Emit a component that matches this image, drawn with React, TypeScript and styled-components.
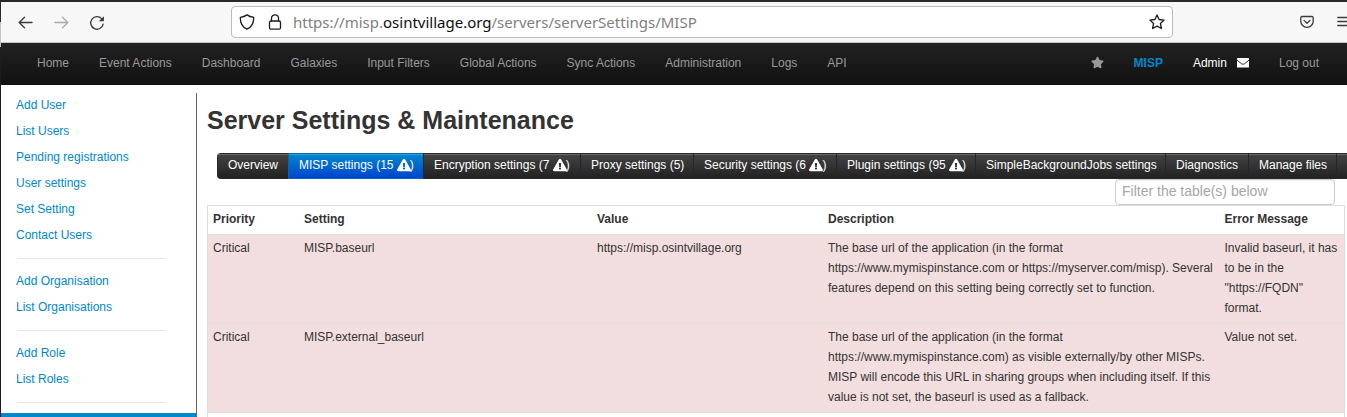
import React from "react";
import styled, { createGlobalStyle } from "styled-components";
import { FaStar, FaExclamationTriangle } from "react-icons/fa";

const GlobalStyle = createGlobalStyle`
  *, *::before, *::after { box-sizing: border-box; }
  html, body { margin: 0; padding: 0; background: #fff; overflow: hidden; }
  body { font-family: "Liberation Sans", Arial, sans-serif; font-size: 12px; line-height: 20px; color: #333; }
`;

const Screen = styled.div`
  display: flex;
  width: 1347px;
  height: 417px;
  overflow: hidden;
`;

const WindowEdge = styled.div`
  flex: 0 0 1px;
  background: linear-gradient(#2b282b 0 22px, #c4c4c4 22px 47px, #1f1a24 47px);
`;

const BrowserWindow = styled.div`
  flex: 1;
  min-width: 0;
  display: flex;
  flex-direction: column;
`;

const Toolbar = styled.header`
  flex: 0 0 43px;
  display: flex;
  align-items: flex-start;
  border-top: 2px solid #2b282b;
  border-bottom: 1px solid #c3c8c5;
  background: #f7f7f7;
  color: #3a3a3a;
`;

const ToolIcon = styled.svg<{ $left: number; $top: number; $right?: number; $faded?: boolean }>`
  display: block;
  flex: none;
  margin: ${(p) => p.$top}px ${(p) => p.$right ?? 0}px 0 ${(p) => p.$left}px;
  opacity: ${(p) => (p.$faded ? 0.4 : 1)};
  fill: none;
  stroke: currentColor;
  stroke-width: 1.3;
  stroke-linecap: round;
  stroke-linejoin: round;
`;

const AddressBar = styled.div`
  flex: 0 0 942px;
  display: flex;
  height: 32px;
  margin: 4px 0 0 126px;
  border: 1px solid #bcbcbc;
  border-radius: 4px;
  background: #fff;
  color: #1c1c1c;
`;

const Address = styled.div`
  flex: 1;
  padding-left: 11px;
  font-family: "Noto Sans", "Open Sans", sans-serif;
  font-size: 15px;
  line-height: 31px;
  white-space: nowrap;
  color: #808080;
  b { font-weight: 400; color: #0c0c0d; }
`;

const NavBar = styled.nav`
  flex: 0 0 42px;
  display: flex;
  justify-content: space-between;
  padding: 10px 13px 0 21px;
  background: linear-gradient(#222, #111);
`;

const NavGroup = styled.div`
  display: flex;
`;

const NavLink = styled.a<{ $tone?: "brand" | "white" }>`
  display: flex;
  align-items: center;
  height: 20px;
  padding: 0 15px;
  white-space: nowrap;
  color: ${(p) => (p.$tone === "brand" ? "#0088cc" : p.$tone === "white" ? "#fff" : "#999")};
  font-weight: ${(p) => (p.$tone === "brand" ? 700 : 400)};
`;

const StarIcon = styled(FaStar)`
  display: block;
  margin-bottom: 1px;
`;

const MailIcon = styled.svg`
  display: block;
  margin-left: 10px;
`;

const Page = styled.div`
  flex: 1;
  display: flex;
  min-height: 0;
`;

const Sidebar = styled.aside`
  flex: 0 0 196px;
  margin-top: 8px;
  border-right: 1px solid #666;
`;

const SideLink = styled.a`
  display: block;
  height: 26px;
  padding: 2px 15px 4px;
  color: #0088cc;
`;

const SideRule = styled.hr`
  height: 1px;
  margin: 9px 31px 10px 16px;
  border: 0;
  background: #e5e5e5;
`;

const SideActive = styled.div`
  height: 26px;
  background: #0088cc;
`;

const Main = styled.main`
  flex: 1;
  min-width: 0;
  display: flex;
  flex-direction: column;
  padding-left: 10px;
`;

const Title = styled.h2`
  height: 40px;
  margin: 15px 0 13px;
  font-size: 25px;
  line-height: 40px;
  font-weight: 700;
  white-space: nowrap;
`;

const Tabs = styled.div`
  display: flex;
  flex: 0 0 26px;
  margin-left: 10px;
  overflow: hidden;
  border-radius: 4px 0 0 4px;
`;

const Tab = styled.button<{ $width: number; $active?: boolean }>`
  flex: 0 0 ${(p) => p.$width}px;
  display: flex;
  align-items: center;
  height: 26px;
  padding: 0 0 2px 10px;
  border: 1px solid ${(p) => (p.$active ? "#0067bd" : "#272727")};
  border-width: 1px 0 1px 1px;
  background: ${(p) => (p.$active ? "linear-gradient(#0088cc, #0044cc)" : "linear-gradient(#444, #222)")};
  box-shadow: inset 0 1px 0 rgba(255, 255, 255, 0.2);
  color: #fff;
  font: 12px/20px "Liberation Sans", Arial, sans-serif;
  white-space: pre;
`;

const WarnIcon = styled(FaExclamationTriangle)`
  display: block;
  flex: none;
  margin: 0 -1px 1px 0;
`;

const Filter = styled.input`
  flex: 0 0 26px;
  align-self: flex-end;
  width: 220px;
  margin-right: 12px;
  padding: 0 6px 3px;
  border: 1px solid #ccc;
  border-radius: 4px;
  background: #fff;
  box-shadow: inset 0 1px 1px rgba(0, 0, 0, 0.075);
  font: 14px/20px "Liberation Sans", Arial, sans-serif;
  &::placeholder { color: #a6a6a6; opacity: 1; }
`;

const Table = styled.div`
  flex: none;
  width: 1138px;
  height: 240px;
  border: 1px solid #ddd;
`;

const Row = styled.div<{ $head?: boolean }>`
  display: grid;
  grid-template-columns: 91px 293px 231px 396.5px 124.5px;
  border-bottom: 1px solid #ddd;
  background: ${(p) => (p.$head ? "#fff" : "#f2dede")};
  font-weight: ${(p) => (p.$head ? 700 : 400)};
`;

const Cell = styled.div`
  padding: 3px 0 5px 5px;
  white-space: pre;
`;

const NAV = ["Home", "Event Actions", "Dashboard", "Galaxies", "Input Filters", "Global Actions", "Sync Actions", "Administration", "Logs", "API"];

const SIDE_GROUPS = [
  ["Add User", "List Users", "Pending registrations", "User settings", "Set Setting", "Contact Users"],
  ["Add Organisation", "List Organisations"],
  ["Add Role", "List Roles"],
];

const TABS: { label: string; width: number; warn?: boolean; active?: boolean }[] = [
  { label: "Overview", width: 71 },
  { label: "MISP settings (15 ", width: 135, warn: true, active: true },
  { label: "Encryption settings (7 ", width: 157, warn: true },
  { label: "Proxy settings (5)", width: 113 },
  { label: "Security settings (6 ", width: 143, warn: true },
  { label: "Plugin settings (95 ", width: 139, warn: true },
  { label: "SimpleBackgroundJobs settings", width: 190 },
  { label: "Diagnostics", width: 83 },
  { label: "Manage files", width: 88 },
  { label: "", width: 90 },
];

const ROWS = [
  [
    "Critical",
    "MISP.baseurl",
    "https://misp.osintvillage.org",
    "The base url of the application (in the format\nhttps://www.mymispinstance.com or https://myserver.com/misp). Several\nfeatures depend on this setting being correctly set to function.",
    "Invalid baseurl, it has\nto be in the\n\"https://FQDN\"\nformat.",
  ],
  [
    "Critical",
    "MISP.external_baseurl",
    "",
    "The base url of the application (in the format\nhttps://www.mymispinstance.com) as visible externally/by other MISPs.\nMISP will encode this URL in sharing groups when including itself. If this\nvalue is not set, the baseurl is used as a fallback.",
    "Value not set.",
  ],
];

export default function App() {
  return (
    <Screen>
      <GlobalStyle />
      <WindowEdge />
      <BrowserWindow>
        <Toolbar>
          <ToolIcon $left={17} $top={13} width="15" height="15" viewBox="0 0 15 15">
            <path d="M14 7.500H1.200M6.500 2.200L1.200 7.500l5.300 5.300" />
          </ToolIcon>
          <ToolIcon $left={21} $top={13} $faded width="15" height="15" viewBox="0 0 15 15">
            <path d="M1 7.500h12.800M8.500 2.200l5.300 5.300-5.300 5.300" />
          </ToolIcon>
          <ToolIcon $left={20} $top={13} width="16" height="16" viewBox="0 0 16 16">
            <path d="M14.200 9.200A6.300 6.300 0 1 1 12.800 3.800" />
            <path d="M14.900 1.200v4.600a.4.4 0 0 1-.4.400H9.900z" fill="currentColor" stroke="none" />
          </ToolIcon>
          <AddressBar>
            <ToolIcon $left={7} $top={7} width="16" height="16" viewBox="0 0 16 16">
              <path d="M8 .9C6.200 2.200 3.800 3.100 1.300 3.400 1.200 8.800 3.200 13 8 15.200 12.800 13 14.800 8.800 14.700 3.400 12.200 3.100 9.800 2.200 8 .9z" />
            </ToolIcon>
            <ToolIcon $left={13} $top={7} width="14" height="16" viewBox="0 0 14 16">
              <rect x="1.500" y="7" width="11" height="8.200" rx="1.500" />
              <path d="M3.500 7V4.300a3.500 3.500 0 0 1 7 0V7" />
            </ToolIcon>
            <Address>
              https://misp.<b>osintvillage.org</b>/servers/serverSettings/MISP
            </Address>
            <ToolIcon $left={0} $top={7} $right={7} width="16" height="16" viewBox="0 0 16 16">
              <path d="M8 .9l2.100 4.600 5 .6-3.700 3.400 1 5L8 12.100l-4.400 2.400 1-5L.9 6.100l5-.6z" />
            </ToolIcon>
          </AddressBar>
          <ToolIcon $left={127} $top={13} width="14" height="14" viewBox="0 0 14 14">
            <path d="M2 1.500h10a1.200 1.200 0 0 1 1.200 1.200v3.500a6.200 6.200 0 0 1-12.400 0V2.700A1.200 1.200 0 0 1 2 1.500z" />
            <path d="M4 5.400l3 2.900 3-2.900" />
          </ToolIcon>
          <ToolIcon $left={23} $top={13} width="14" height="14" viewBox="0 0 14 14">
            <path d="M.8 2.500h12.400M.8 6.500h12.400M.8 10.500h12.400" />
          </ToolIcon>
        </Toolbar>
        <NavBar>
          <NavGroup>
            {NAV.map((item) => (
              <NavLink key={item}>{item}</NavLink>
            ))}
          </NavGroup>
          <NavGroup>
            <NavLink><StarIcon size={13} /></NavLink>
            <NavLink $tone="brand">MISP</NavLink>
            <NavLink $tone="white">
              Admin
              <MailIcon width="12" height="10" viewBox="0 0 12 10">
                <rect width="12" height="9.500" rx="0.600" fill="#fff" />
                <path d="M0 2.200L4.600 5.800q1.400 1 2.800 0L12 2.200" fill="none" stroke="#1a1a1a" strokeWidth="0.900" />
              </MailIcon>
            </NavLink>
            <NavLink>Log out</NavLink>
          </NavGroup>
        </NavBar>
        <Page>
          <Sidebar>
            {SIDE_GROUPS.map((group) => (
              <React.Fragment key={group[0]}>
                {group.map((item) => (
                  <SideLink key={item}>{item}</SideLink>
                ))}
                <SideRule />
              </React.Fragment>
            ))}
            <SideActive />
          </Sidebar>
          <Main>
            <Title>Server Settings &amp; Maintenance</Title>
            <Tabs>
              {TABS.map((tab) => (
                <Tab key={tab.label} $width={tab.width} $active={tab.active}>
                  {tab.label}
                  {tab.warn && <WarnIcon size={14} />}
                  {tab.warn && ")"}
                </Tab>
              ))}
            </Tabs>
            <Filter placeholder="Filter the table(s) below" />
            <Table>
              <Row $head>
                {["Priority", "Setting", "Value", "Description", "Error Message"].map((h) => (
                  <Cell key={h}>{h}</Cell>
                ))}
              </Row>
              {ROWS.map((row) => (
                <Row key={row[1]}>
                  {row.map((text, i) => (
                    <Cell key={i}>{text}</Cell>
                  ))}
                </Row>
              ))}
            </Table>
          </Main>
        </Page>
      </BrowserWindow>
    </Screen>
  );
}
